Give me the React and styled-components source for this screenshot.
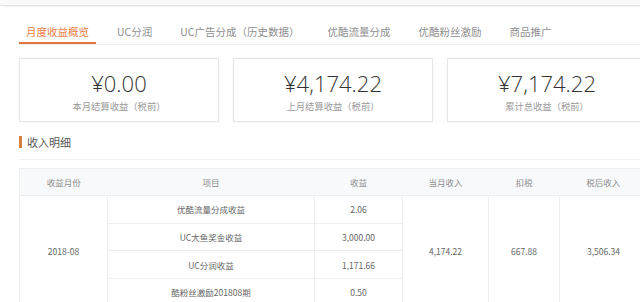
import React from "react";
import styled, { createGlobalStyle } from "styled-components";

const GlobalStyle = createGlobalStyle`
  html, body {
    margin: 0;
    padding: 0;
    background: #fff;
    width: 640px;
    height: 302px;
    overflow: hidden;
    font-family: "Noto Sans CJK SC", "Noto Sans", sans-serif;
  }
`;

const tabs = ["月度收益概览", "UC分润", "UC广告分成（历史数据）", "优酷流量分成", "优酷粉丝激励", "商品推广"];

const cards = [
  { value: "¥0.00", label: "本月结算收益（税前）" },
  { value: "¥4,174.22", label: "上月结算收益（税前）" },
  { value: "¥7,174.22", label: "累计总收益（税前）" },
];

const items = [
  { name: "优酷流量分成收益", amount: "2.06" },
  { name: "UC大鱼奖金收益", amount: "3,000.00" },
  { name: "UC分润收益", amount: "1,171.66" },
  { name: "酷粉丝激励201808期", amount: "0.50" },
];

export default function App() {
  return (
    <Page>
      <GlobalStyle />
      <TopBar />
      <Panel>
        <TabNav>
          {tabs.map((t, i) => (
            <Tab key={t} $active={i === 0}>{t}</Tab>
          ))}
        </TabNav>
        <Content>
          <CardRow>
            {cards.map((c) => (
              <Card key={c.label}>
                <Value>{c.value}</Value>
                <Label>{c.label}</Label>
              </Card>
            ))}
          </CardRow>
          <SectionTitle>收入明细</SectionTitle>
          <Table>
            <colgroup>
              <col style={{ width: 88 }} />
              <col style={{ width: 207 }} />
              <col style={{ width: 88 }} />
              <col style={{ width: 86 }} />
              <col style={{ width: 71 }} />
              <col style={{ width: 88 }} />
            </colgroup>
            <thead>
              <tr>
                <Th>收益月份</Th>
                <Th>项目</Th>
                <Th>收益</Th>
                <Th>当月收入</Th>
                <Th>扣税</Th>
                <Th>税后收入</Th>
              </tr>
            </thead>
            <tbody>
              {items.map((it, i) => (
                <tr key={it.name}>
                  {i === 0 && <Td rowSpan={4}>2018-08</Td>}
                  <Td>{it.name}</Td>
                  <Td>{it.amount}</Td>
                  {i === 0 && <Td rowSpan={4}>4,174.22</Td>}
                  {i === 0 && <Td rowSpan={4}>667.88</Td>}
                  {i === 0 && <Td rowSpan={4}>3,506.34</Td>}
                </tr>
              ))}
            </tbody>
          </Table>
        </Content>
      </Panel>
    </Page>
  );
}

const Page = styled.div`
  width: 640px;
  height: 302px;
  overflow: hidden;
`;

const TopBar = styled.div`
  height: 5px;
  background: #fafafa;
  border-bottom: 1px solid #e6e6e6;
`;

const Panel = styled.div`
  margin-left: 4px;
  border-top: 1px solid #f3f3f3;
  padding-top: 13px;
`;

const TabNav = styled.div`
  display: flex;
  gap: 14px;
  margin-left: 15px;
  border-bottom: 1px solid #eeeeee;
  height: 24px;
`;

const Tab = styled.div`
  padding: 0 7px;
  height: 24px;
  line-height: 24px;
  box-sizing: border-box;
  font-size: 10.5px;
  white-space: nowrap;
  color: ${(p) => (p.$active ? "#ea7d45" : "#8f8f8f")};
  border-bottom: 2px solid ${(p) => (p.$active ? "#e2773d" : "transparent")};
  margin-bottom: -1px;
`;

const Content = styled.div`
  padding-left: 15px;
  width: 628px;
`;

const CardRow = styled.div`
  display: flex;
  gap: 14px;
  margin-top: 13px;
`;

const Card = styled.div`
  flex: 0 0 200px;
  height: 64px;
  box-sizing: border-box;
  border: 1px solid #e6e6e6;
  box-shadow: 0 0 2px rgba(0, 0, 0, 0.04);
  display: flex;
  flex-direction: column;
  align-items: center;
  padding-top: 9px;
`;

const Value = styled.div`
  font-family: "Open Sans", "Noto Sans", sans-serif;
  font-weight: 300;
  font-size: 22px;
  line-height: 30px;
  color: #333;
`;

const Label = styled.div`
  font-size: 9.3px;
  line-height: 14px;
  color: #9a9a9a;
  margin-top: 1px;
`;

const SectionTitle = styled.div`
  margin-top: 14px;
  height: 23px;
  display: flex;
  align-items: flex-start;
  font-size: 11px;
  line-height: 12px;
  color: #555;
  border-bottom: 1px solid #f2f2f2;
  &::before {
    content: "";
    width: 3px;
    height: 12px;
    background: #d9803f;
    margin-right: 5px;
  }
`;

const Table = styled.table`
  margin-top: 8px;
  width: 628px;
  table-layout: fixed;
  border-collapse: collapse;
  border: 1px solid #eef0f3;
`;

const Th = styled.th`
  height: 26px;
  padding: 0;
  background: #f8f9fb;
  font-weight: normal;
  font-size: 8.5px;
  color: #8c8c8c;
  text-align: center;
  border: none;
  border-bottom: 1px solid #eceef2;
`;

const Td = styled.td`
  height: 26.7px;
  padding: 0;
  font-size: 8.5px;
  color: #666;
  text-align: center;
  border: 1px solid #eceef2;
`;
